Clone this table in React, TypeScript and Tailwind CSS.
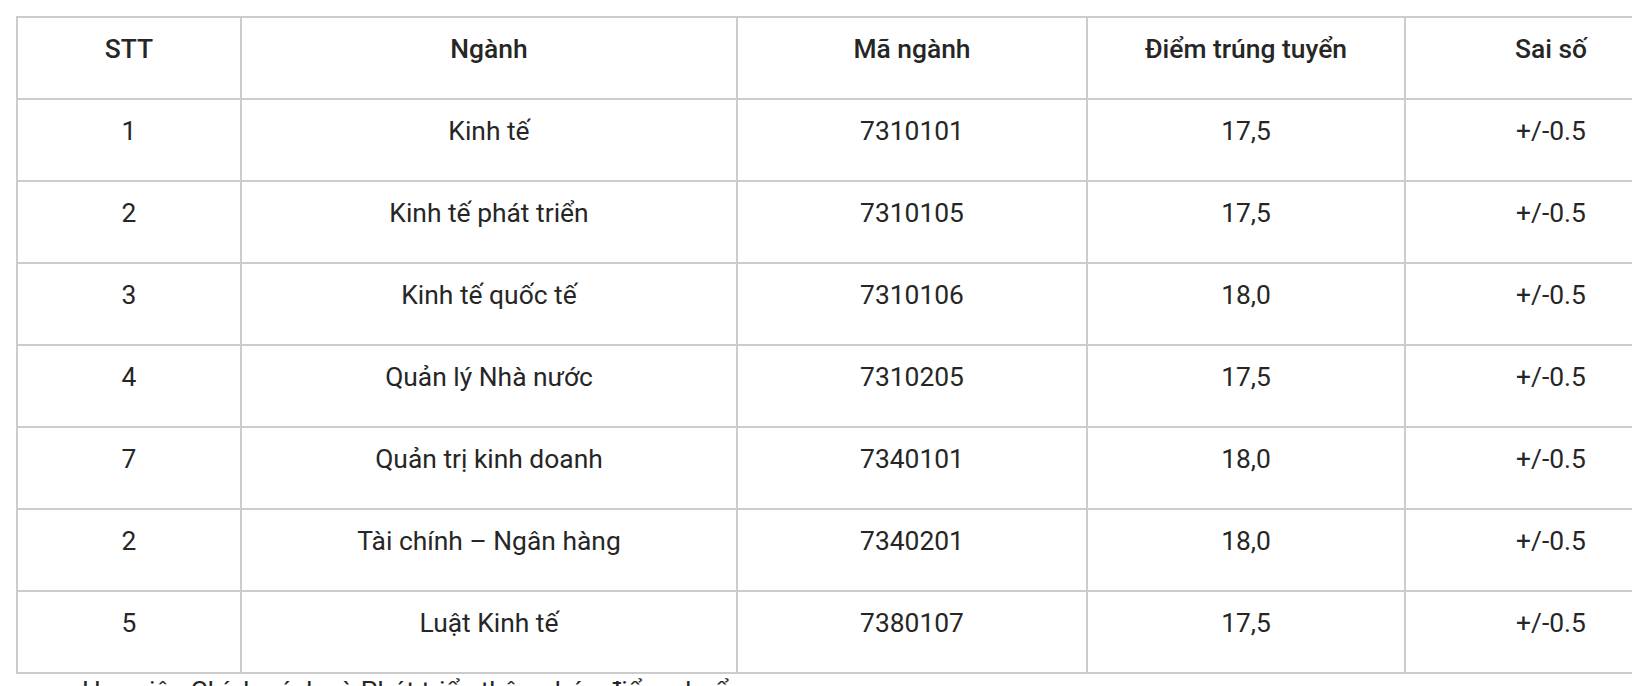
const rows = [
  { stt: "1", nganh: "Kinh tế", ma: "7310101", diem: "17,5" },
  { stt: "2", nganh: "Kinh tế phát triển", ma: "7310105", diem: "17,5" },
  { stt: "3", nganh: "Kinh tế quốc tế", ma: "7310106", diem: "18,0" },
  { stt: "4", nganh: "Quản lý Nhà nước", ma: "7310205", diem: "17,5" },
  { stt: "7", nganh: "Quản trị kinh doanh", ma: "7340101", diem: "18,0" },
  { stt: "2", nganh: "Tài chính – Ngân hàng", ma: "7340201", diem: "18,0" },
  { stt: "5", nganh: "Luật Kinh tế", ma: "7380107", diem: "17,5" },
];

const cell = "border-2 border-[#cccccc] h-[82px] align-top text-center pt-[12px] leading-[39px]";

export default function App() {
  return (
    <div className="w-[1632px] h-[686px] overflow-hidden bg-white font-['Roboto',sans-serif] text-[26.4px] text-[#262626]">
      <div className="pt-[16px] pl-[16px]">
        <table className="border-collapse w-[1680px] table-fixed">
          <colgroup>
            <col className="w-[224px]" />
            <col className="w-[496px]" />
            <col className="w-[350px]" />
            <col className="w-[318px]" />
            <col className="w-[292px]" />
          </colgroup>
          <thead>
            <tr>
              <th className={`${cell} font-medium`}>STT</th>
              <th className={`${cell} font-medium`}>Ngành</th>
              <th className={`${cell} font-medium`}>Mã ngành</th>
              <th className={`${cell} font-medium`}>Điểm trúng tuyển</th>
              <th className={`${cell} font-medium`}>Sai số</th>
            </tr>
          </thead>
          <tbody>
            {rows.map((r, i) => (
              <tr key={i}>
                <td className={cell}>{r.stt}</td>
                <td className={cell}>{r.nganh}</td>
                <td className={cell}>{r.ma}</td>
                <td className={cell}>{r.diem}</td>
                <td className={cell}>+/-0.5</td>
              </tr>
            ))}
          </tbody>
        </table>
        <p className="pl-[66px] mt-[-2px] leading-[39px]">
          Học viện Chính sách và Phát triển thông báo điểm chuẩn
        </p>
      </div>
    </div>
  );
}
